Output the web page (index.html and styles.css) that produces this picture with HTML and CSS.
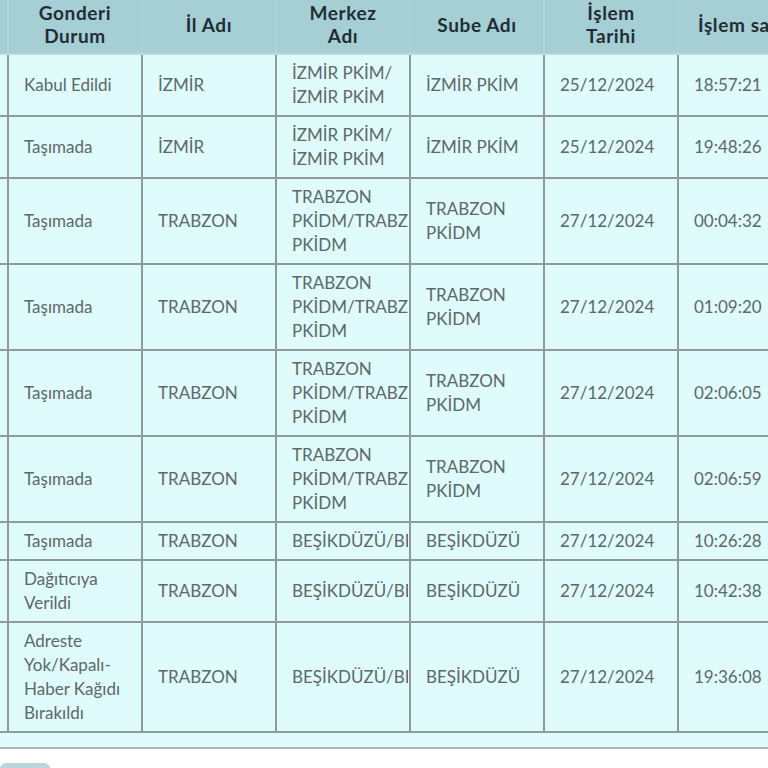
FILE: index.html
```html
<!DOCTYPE html>
<html lang="tr">
<head>
<meta charset="utf-8">
<title>Gönderi Hareketleri</title>
<link rel="stylesheet" href="styles.css">
</head>
<body>
<div class="viewport">
  <div class="grid">
    <table class="moves">
      <colgroup>
        <col class="c-hidden">
        <col class="c-std"><col class="c-std"><col class="c-std">
        <col class="c-std"><col class="c-std"><col class="c-std">
      </colgroup>
      <thead>
        <tr>
          <th class="edge"></th>
          <th>Gonderi<br>Durum</th>
          <th>İl Adı</th>
          <th>Merkez<br>Adı</th>
          <th>Sube Adı</th>
          <th>İşlem<br>Tarihi</th>
          <th class="nowrap">İşlem saati</th>
        </tr>
      </thead>
      <tbody>
        <tr>
          <td class="edge"></td>
          <td>Kabul Edildi</td>
          <td>İZMİR</td>
          <td>İZMİR PKİM/<br>İZMİR PKİM</td>
          <td>İZMİR PKİM</td>
          <td>25/12/2024</td>
          <td>18:57:21</td>
        </tr>
        <tr>
          <td class="edge"></td>
          <td>Taşımada</td>
          <td>İZMİR</td>
          <td>İZMİR PKİM/<br>İZMİR PKİM</td>
          <td>İZMİR PKİM</td>
          <td>25/12/2024</td>
          <td>19:48:26</td>
        </tr>
        <tr>
          <td class="edge"></td>
          <td>Taşımada</td>
          <td>TRABZON</td>
          <td><span class="clip">TRABZON<br>PKİDM/TRABZON<br>PKİDM</span></td>
          <td>TRABZON PKİDM</td>
          <td>27/12/2024</td>
          <td>00:04:32</td>
        </tr>
        <tr>
          <td class="edge"></td>
          <td>Taşımada</td>
          <td>TRABZON</td>
          <td><span class="clip">TRABZON<br>PKİDM/TRABZON<br>PKİDM</span></td>
          <td>TRABZON PKİDM</td>
          <td>27/12/2024</td>
          <td>01:09:20</td>
        </tr>
        <tr>
          <td class="edge"></td>
          <td>Taşımada</td>
          <td>TRABZON</td>
          <td><span class="clip">TRABZON<br>PKİDM/TRABZON<br>PKİDM</span></td>
          <td>TRABZON PKİDM</td>
          <td>27/12/2024</td>
          <td>02:06:05</td>
        </tr>
        <tr>
          <td class="edge"></td>
          <td>Taşımada</td>
          <td>TRABZON</td>
          <td><span class="clip">TRABZON<br>PKİDM/TRABZON<br>PKİDM</span></td>
          <td>TRABZON PKİDM</td>
          <td>27/12/2024</td>
          <td>02:06:59</td>
        </tr>
        <tr>
          <td class="edge"></td>
          <td>Taşımada</td>
          <td>TRABZON</td>
          <td><span class="clip">BEŞİKDÜZÜ/BEŞİKDÜZÜ</span></td>
          <td>BEŞİKDÜZÜ</td>
          <td>27/12/2024</td>
          <td>10:26:28</td>
        </tr>
        <tr>
          <td class="edge"></td>
          <td>Dağıtıcıya<br>Verildi</td>
          <td>TRABZON</td>
          <td><span class="clip">BEŞİKDÜZÜ/BEŞİKDÜZÜ</span></td>
          <td>BEŞİKDÜZÜ</td>
          <td>27/12/2024</td>
          <td>10:42:38</td>
        </tr>
        <tr>
          <td class="edge"></td>
          <td>Adreste<br>Yok/Kapalı-<br>Haber Kağıdı<br>Bırakıldı</td>
          <td>TRABZON</td>
          <td><span class="clip">BEŞİKDÜZÜ/BEŞİKDÜZÜ</span></td>
          <td>BEŞİKDÜZÜ</td>
          <td>27/12/2024</td>
          <td>19:36:08</td>
        </tr>
      </tbody>
    </table>
  </div>
  <div class="actions">
    <button class="btn" type="button">Geri</button>
  </div>
</div>
</body>
</html>
```

FILE: styles.css
```css
html, body {
  margin: 0;
  padding: 0;
  background: #ffffff;
}

.viewport {
  width: 768px;
  height: 768px;
  overflow: hidden;
  font-family: Lato, "Open Sans", "Noto Sans", sans-serif;
}

.grid {
  width: 900px;
  background: #e0fbfb;
  border-bottom: 2px solid #a9b4b4;
  padding-bottom: 14px;
}

.moves {
  border-collapse: collapse;
  table-layout: fixed;
  width: 813px;
}

.c-hidden { width: 8px; }
.c-std { width: 134px; }

.moves th {
  background: #a6ced5;
  color: #1f2e34;
  font-weight: 700;
  font-size: 19px;
  letter-spacing: 0.6px;
  line-height: 23px;
  text-align: center;
  vertical-align: middle;
  padding: 1px 2px 6px;
  border-left: 2px solid #aed3d8;
  border-bottom: 2px solid #b7dadd;
  white-space: normal;
}

.moves td {
  color: #5b6969;
  font-size: 17px;
  line-height: 24px;
  text-align: left;
  vertical-align: middle;
  padding: 6px 0 6px 15px;
  border: 2px solid #8f9b9b;
  overflow: hidden;
}

.moves td.edge,
.moves th.edge {
  padding: 0;
  border-left: none;
}

.moves th.nowrap {
  white-space: nowrap;
}

.clip {
  display: block;
  white-space: nowrap;
  overflow: hidden;
  width: 116px;
}

.moves tbody tr:first-child td {
  border-top: none;
}

.actions {
  padding-top: 14px;
}

.btn {
  width: 50px;
  height: 30px;
  border: none;
  border-radius: 6px;
  background: #b8d6dc;
  font-family: Lato, sans-serif;
  font-size: 14px;
  color: #233238;
}
```
